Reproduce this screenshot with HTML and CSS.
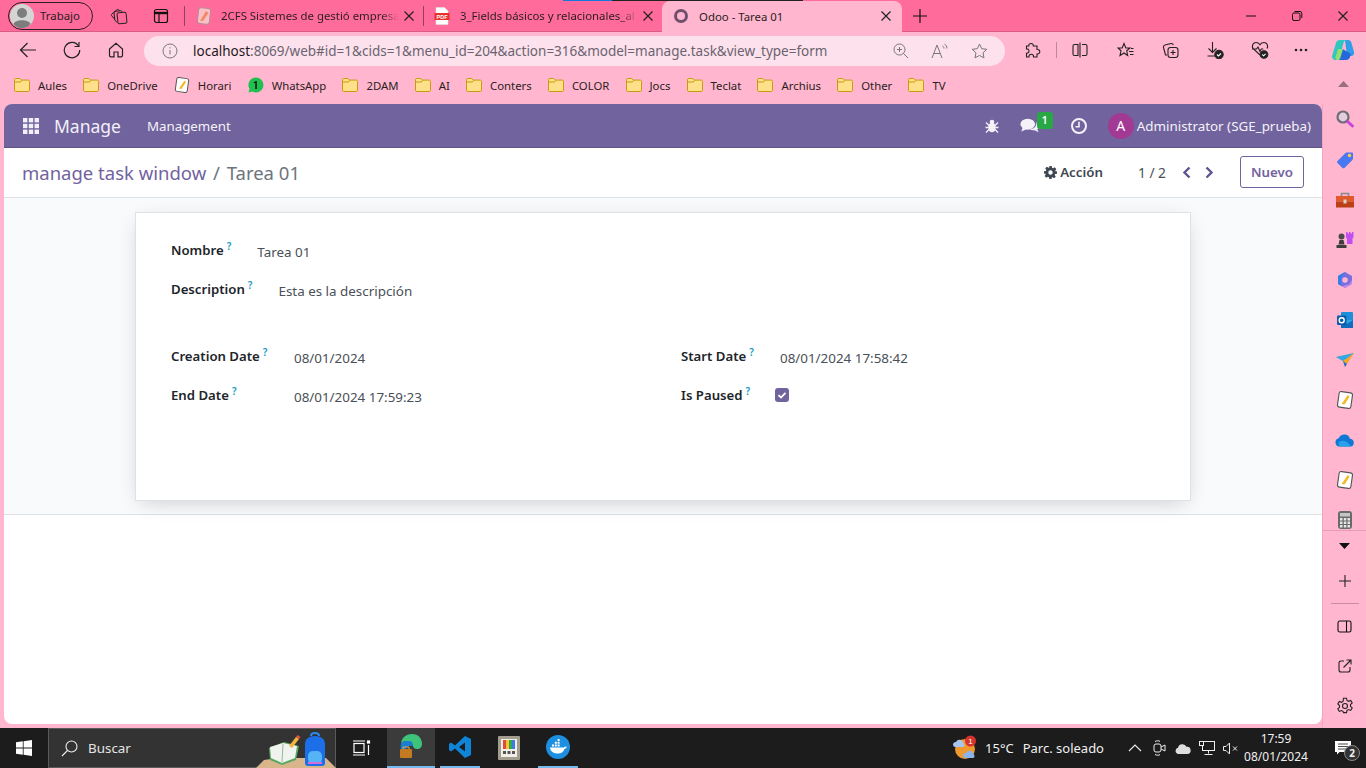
FILE: index.html
```html
<!DOCTYPE html>
<html>
  <head>
    <meta charset="UTF-8" />
    <title>Odoo - Tarea 01</title>
    <link rel="stylesheet" href="styles.css">
  </head>
  <body>
    <svg class="defs" width="0" height="0">
      <symbol id="folder" viewBox="0 0 16 16">
        <path d="M.5 2.700C.5 2 1 1.500 1.700 1.500h4l1.600 1.600h7c.7 0 1.200.5 1.200 1.200v9c0 .7-.5 1.200-1.200 1.200H1.700c-.7 0-1.200-.5-1.200-1.200z" fill="#ffe08a" stroke="#c9990f" />
        <path d="M.5 5h6l1.200-1.700" fill="none" stroke="#c9990f" />
      </symbol>
      <symbol id="note" viewBox="0 0 16 16">
        <rect x="2" y="1" width="12" height="14" rx="2" fill="#fff" stroke="#555" transform="rotate(8 8 8)" />
        <path d="M5 11.500 10.500 3.500 12 5 7.500 12z" fill="#f2b824" />
      </symbol>
      <symbol id="close" viewBox="0 0 12 12">
        <path d="M1.500 1.500l9 9M10.500 1.500l-9 9" stroke="#222" stroke-width="1.200" fill="none" />
      </symbol>
    </svg>

    <div class="tabstrip">
      <div class="profile">
        <span class="profile-pic">
          <svg width="24" height="24" viewBox="0 0 24 24"><circle cx="12" cy="12" r="12" fill="#d5d5d5" /><circle cx="12" cy="9" r="5" fill="#7d7d7d" /><path d="M3.500 20c1.500-5 15.500-5 17 0-4 5.500-13 5.500-17 0z" fill="#7d7d7d" /></svg>
        </span>
        Trabajo
      </div>
      <span class="strip-btn">
        <svg width="18" height="18" viewBox="0 0 18 18" fill="none" stroke="#222"><rect x="7.500" y="5.500" width="9" height="11" rx="1.500" transform="rotate(-6 12 11)" /><path d="M7 15.500 4.800 13 4 5.800c0-.8.300-1.300 1-1.400l5.500-.7c.8-.1 1.300.3 1.500 1" /><path d="M4.500 12 1.700 8.800c-.5-.6-.4-1.300.2-1.800l5-4.200c.6-.5 1.300-.5 1.800 0l1 1" /></svg>
      </span>
      <span class="strip-btn">
        <svg width="16" height="16" viewBox="0 0 16 16" fill="none" stroke="#111" stroke-width="1.200"><rect x="1.500" y="1.500" width="13" height="13" rx="2" /><path d="M1.500 5h13" stroke-width="2.400" /><path d="M6 5v9.500" /></svg>
      </span>
      <span class="tab-sep first"></span>
      <div class="tab">
        <svg class="fav" width="16" height="18" viewBox="0 0 16 18"><rect x="2" y="1" width="12" height="16" rx="2.500" fill="#f9c0c8" stroke="#b98a94" transform="rotate(6 8 9)" /><path d="M4 14 10 4l2.500 2L7 14z" fill="#f48a64" /></svg>
        <span class="tab-title">2CFS Sistemes de gestió empresa</span>
        <svg class="tab-x" width="12" height="12"><use href="#close" /></svg>
      </div>
      <span class="tab-sep"></span>
      <div class="tab pdf">
        <svg class="fav" width="16" height="18" viewBox="0 0 16 18">
          <path d="M2 .5h8.500L14 4v13.500H2z" fill="#fff" stroke="#ddd" stroke-width=".6" />
          <rect x=".5" y="6" width="15" height="7" fill="#e8312a" />
          <text x="8" y="11.500" font-size="5.500" font-weight="700" fill="#fff" text-anchor="middle" font-family="Liberation Sans">PDF</text>
        </svg>
        <span class="tab-title">3_Fields básicos y relacionales_al</span>
        <svg class="tab-x" width="12" height="12"><use href="#close" /></svg>
      </div>
      <div class="tab active">
        <svg class="fav" width="16" height="16" viewBox="0 0 16 16"><circle cx="8" cy="8" r="5.500" fill="none" stroke="#71506f" stroke-width="3" /></svg>
        <span class="tab-title">Odoo - Tarea 01</span>
        <svg class="tab-x" width="12" height="12"><use href="#close" /></svg>
      </div>
      <span class="new-tab">
        <svg width="16" height="16" viewBox="0 0 16 16"><path d="M8 1v14M1 8h14" stroke="#111" stroke-width="1.200" /></svg>
      </span>
      <div class="win-controls">
        <span class="win-btn"><svg width="12" height="12" viewBox="0 0 12 12"><path d="M1 6h10" stroke="#111" /></svg></span>
        <span class="win-btn"><svg width="12" height="12" viewBox="0 0 12 12" fill="none" stroke="#111"><rect x="1.500" y="3" width="7.500" height="7.500" rx="1.500" /><path d="M3.500 1.500H9A1.800 1.800 0 0 1 10.800 3.300V8" /></svg></span>
        <span class="win-btn"><svg width="12" height="12"><use href="#close" /></svg></span>
      </div>
      <span class="load-line"></span>
    </div>

    <div class="toolbar">
      <span class="tool-btn">
        <svg width="18" height="18" viewBox="0 0 18 18" fill="none" stroke="#222" stroke-width="1.200"><path d="M17 9H1.500M8.500 2 1.500 9l7 7" /></svg>
      </span>
      <span class="tool-btn">
        <svg width="18" height="18" viewBox="0 0 18 18" fill="none" stroke="#222" stroke-width="1.200"><path d="M15.500 5A7.700 7.700 0 1 0 16.700 9" /><path d="M16 1v4.500h-4.500" /></svg>
      </span>
      <span class="tool-btn">
        <svg width="16" height="16" viewBox="0 0 16 16" fill="none" stroke="#222" stroke-width="1.200"><path d="M1.500 7 8 1.200 14.500 7v6.500a1.300 1.300 0 0 1-1.300 1.300H10V10H6v4.800H2.800a1.300 1.300 0 0 1-1.300-1.300z" /></svg>
      </span>
      <div class="address">
        <svg class="info" width="16" height="16" viewBox="0 0 16 16" fill="none" stroke="#777"><circle cx="8" cy="8" r="7" /><path d="M8 7v4.500M8 4.200v1.200" /></svg>
        <span class="url"><b>localhost</b>:8069/web#id=1&amp;cids=1&amp;menu_id=204&amp;action=316&amp;model=manage.task&amp;view_type=form</span>
        <span class="addr-icons">
          <svg width="16" height="16" viewBox="0 0 16 16" fill="none" stroke="#777"><circle cx="6.500" cy="6.500" r="5.500" /><path d="M10.500 10.500 15 15M6.500 4v5M4 6.500h5" /></svg>
          <svg width="18" height="16" viewBox="0 0 18 16" fill="none" stroke="#777"><path d="M1 15 6 2l5 13M2.800 10.500h6.500M11.500 3c1 .5 1.500 1.500 1.500 2.500M13.500 1c1.500 1 2.500 2.500 2.500 4.500" /></svg>
          <svg width="17" height="16" viewBox="0 0 17 16" fill="none" stroke="#777"><path d="M8.500 1l2.200 4.700 5.100.6-3.800 3.500 1 5.100-4.500-2.500-4.500 2.500 1-5.100L1.200 6.300l5.100-.6z" /></svg>
        </span>
      </div>
      <div class="tool-right">
        <span class="tool-btn">
          <svg width="16" height="16" viewBox="0 0 16 16" fill="none" stroke="#222" stroke-width="1.100"><path d="M6 1.500c1.500 0 2.500 1 2.300 2.500H12v3.500c1.800-.2 2.800.9 2.800 2.200s-1 2.500-2.800 2.300V15H8.500c.2-1.800-.8-2.700-2.200-2.700S3.800 13.200 4 15H1.500v-3.800C3 11.400 4 10.400 4 9S3 6.700 1.500 6.900V4h2.300C3.600 2.500 4.500 1.500 6 1.500z" /></svg>
        </span>
        <span class="tool-sep"></span>
        <span class="tool-btn">
          <svg width="16" height="16" viewBox="0 0 16 16" fill="none" stroke="#222" stroke-width="1.100"><path d="M6 2.500H2.500A1.500 1.500 0 0 0 1 4v8a1.500 1.500 0 0 0 1.500 1.500H6zM8 .5v15M10 2.500h3.500A1.500 1.500 0 0 1 15 4v8a1.500 1.500 0 0 1-1.500 1.500H10" /></svg>
        </span>
        <span class="tool-btn">
          <svg width="17" height="16" viewBox="0 0 17 16" fill="none" stroke="#222" stroke-width="1.100"><path d="M7 1.500 8.800 6H13l-3.300 2.800 1 4.700L7 11 3 13.500l1-4.700L1 6h4.200zM12 9.500h4.500M13 12.500h3.500M14 6.500h2.500" /></svg>
        </span>
        <span class="tool-btn">
          <svg width="17" height="17" viewBox="0 0 17 17" fill="none" stroke="#222" stroke-width="1.100"><path d="M5 13H3.500L1.500 5.500A2 2 0 0 1 3 3l6-1.500c1-.2 2 .3 2.300 1.500" /><rect x="6" y="5.500" width="10" height="10" rx="2.500" /><path d="M11 8v5M8.500 10.500h5" /></svg>
        </span>
        <span class="tool-btn">
          <svg width="18" height="18" viewBox="0 0 18 18" fill="none" stroke="#222" stroke-width="1.100"><path d="M6.500 1v10M2.500 7.500l4 4 4-4M1.500 15h8" /><circle cx="13" cy="13.500" r="4.200" fill="#222" /><path d="M11 13.500l1.500 1.500 2.500-2.500" stroke="#fff" /></svg>
        </span>
        <span class="tool-btn">
          <svg width="18" height="18" viewBox="0 0 18 18" fill="none" stroke="#222" stroke-width="1.100"><path d="M9 14 2 7.500C.5 5 2 1.500 5 1.500c2 0 3.200 1 4 2.200.8-1.200 2-2.200 4-2.200 3 0 4.500 3.500 3 6M1 8h4.500l1.500-2 2 4.500 1.300-2.500h2" /><circle cx="13" cy="13.500" r="3.800" fill="#222" /><path d="M11.300 13.500l1.300 1.300 2-2" stroke="#fff" /></svg>
        </span>
        <span class="tool-btn more">
          <svg width="14" height="4" viewBox="0 0 14 4" fill="#222"><circle cx="2" cy="2" r="1.300" /><circle cx="7" cy="2" r="1.300" /><circle cx="12" cy="2" r="1.300" /></svg>
        </span>
        <span class="copilot">
          <svg width="24" height="24" viewBox="0 0 24 24" fill="none"><path d="M14 2h3c2 0 3 1 3.500 3L23 14c.5 2.500-1 4-3 4h-4z" fill="#2f9de8" /><path d="M8 22h7c2 0 3.300-1 4-3l1-3-10-6z" fill="#2468dc" /><path d="M9 2h7c-2 0-3 1-3.500 3L9 18c-.5 2.500-2.500 4-4.500 4S.5 20 1.200 17.500L5 5c.5-2 2-3 4-3z" fill="#2fc7c0" /><path d="M7 11 4.500 19c-.4 1.500.5 3 2 3 1.500 0 2.500-1 3-2.500L12 11z" fill="#8fe06e" /></svg>
        </span>
      </div>
    </div>

    <div class="bookmarks">
      <span class="bm"><svg class="bm-ico"><use href="#folder" /></svg>Aules</span>
      <span class="bm"><svg class="bm-ico"><use href="#folder" /></svg>OneDrive</span>
      <span class="bm"><svg class="bm-ico"><use href="#note" /></svg>Horari</span>
      <span class="bm">
        <svg class="bm-ico" viewBox="0 0 16 16"><path d="M8 .5a7.500 7.500 0 0 1 0 15 7.400 7.400 0 0 1-3.500-.9L.5 15.500l1-3.700A7.500 7.500 0 0 1 8 .5z" fill="#1fc04f" /><path d="M8.800 4v8H7.300V6H5.800V5c1 0 1.500-.3 1.800-1z" fill="#111" /></svg>
        WhatsApp
      </span>
      <span class="bm"><svg class="bm-ico"><use href="#folder" /></svg>2DAM</span>
      <span class="bm"><svg class="bm-ico"><use href="#folder" /></svg>AI</span>
      <span class="bm"><svg class="bm-ico"><use href="#folder" /></svg>Conters</span>
      <span class="bm"><svg class="bm-ico"><use href="#folder" /></svg>COLOR</span>
      <span class="bm"><svg class="bm-ico"><use href="#folder" /></svg>Jocs</span>
      <span class="bm"><svg class="bm-ico"><use href="#folder" /></svg>Teclat</span>
      <span class="bm"><svg class="bm-ico"><use href="#folder" /></svg>Archius</span>
      <span class="bm"><svg class="bm-ico"><use href="#folder" /></svg>Other</span>
      <span class="bm"><svg class="bm-ico"><use href="#folder" /></svg>TV</span>
      <svg class="bm-collapse" width="11" height="6" viewBox="0 0 11 6"><path d="M5.500 0 11 6H0z" fill="#96707f" /></svg>
    </div>

    <div class="middle">
      <div class="webview">
        <nav class="navbar">
          <svg class="apps" width="16" height="16" viewBox="0 0 16 16" fill="#f1eff7">
            <rect width="4.400" height="4.400" /><rect x="5.800" width="4.400" height="4.400" /><rect x="11.600" width="4.400" height="4.400" />
            <rect y="5.800" width="4.400" height="4.400" /><rect x="5.800" y="5.800" width="4.400" height="4.400" /><rect x="11.600" y="5.800" width="4.400" height="4.400" />
            <rect y="11.600" width="4.400" height="4.400" /><rect x="5.800" y="11.600" width="4.400" height="4.400" /><rect x="11.600" y="11.600" width="4.400" height="4.400" />
          </svg>
          <span class="brand">Manage</span>
          <span class="menu">Management</span>
          <div class="systray">
            <svg class="bug" width="14" height="14" viewBox="0 0 14 14" fill="#f4f2f8"><ellipse cx="7" cy="8.500" rx="3.800" ry="4.800" /><circle cx="7" cy="3" r="2.300" /><path d="M1 3.500l3 3M13 3.500l-3 3M.5 8.500h3M13.500 8.500h-3M1 13.500l3-3M13 13.500l-3-3" stroke="#f4f2f8" stroke-width="1.300" /></svg>
            <span class="chat">
              <svg width="20" height="16" viewBox="0 0 22 17" fill="#f4f2f8"><ellipse cx="8.500" cy="6.500" rx="8" ry="6" /><path d="M3 10 1.500 14.500 7 12z" /><path d="M18 4.500c2.500 1 3.500 3 3 5-.3 1.200-1 2-2 2.700l1.500 3.300-4.500-2.300c-2 .3-4 0-5.500-1 4 0 8-2.500 7.500-7.700z" /></svg>
              <span class="chat-badge">1</span>
            </span>
            <svg class="clock" width="16" height="16" viewBox="0 0 16 16" fill="none" stroke="#f4f2f8"><circle cx="8" cy="8" r="7" stroke-width="2" /><path d="M8 3.800V8.700H4.500" stroke-width="1.600" /></svg>
            <span class="avatar">A</span>
            <span class="user">Administrator (SGE_prueba)</span>
          </div>
        </nav>

        <div class="control-panel">
          <div class="breadcrumb"><span class="crumb-link">manage task window</span> <span class="crumb-sep">/</span> Tarea 01</div>
          <div class="actions">
            <span class="action-btn">
              <svg width="13" height="13" viewBox="0 0 16 16"><path fill-rule="evenodd" d="M6.500 0h3l.4 2.200 1.300.6L13.100 1.500l2.100 2.100-1.300 1.900.6 1.300L16 6.500v3l-2.200.4-.6 1.300 1.300 1.900-2.100 2.100-1.900-1.300-1.300.6L9.500 16h-3l-.4-2.200-1.300-.6-1.900 1.300L.8 12.400l1.300-1.900-.6-1.300L0 9.500v-3l2.200-.4.6-1.300L1.500 2.900 3.600.8l1.900 1.300 1.300-.6zM8 5.300a2.700 2.700 0 1 0 0 5.400 2.700 2.700 0 0 0 0-5.400z" fill="#3f4850" /></svg>
              Acción
            </span>
            <span class="pager">1 / 2</span>
            <svg class="pager-arrow" width="9" height="13" viewBox="0 0 9 13" fill="none" stroke="#5f5390" stroke-width="2.400"><path d="M7.500 1.500l-5 5 5 5" /></svg>
            <svg class="pager-arrow next" width="9" height="13" viewBox="0 0 9 13" fill="none" stroke="#5f5390" stroke-width="2.400"><path d="M1.500 1.500l5 5-5 5" /></svg>
            <span class="btn-new">Nuevo</span>
          </div>
        </div>

        <div class="form-area">
          <div class="sheet">
            <div class="field-row">
              <span class="label">Nombre<sup>?</sup></span>
              <span class="value">Tarea 01</span>
            </div>
            <div class="field-row">
              <span class="label">Description<sup>?</sup></span>
              <span class="value">Esta es la descripción</span>
            </div>
            <div class="group">
              <span class="label">Creation Date<sup>?</sup></span>
              <span class="value">08/01/2024</span>
              <span class="label">Start Date<sup>?</sup></span>
              <span class="value">08/01/2024 17:58:42</span>
              <span class="label">End Date<sup>?</sup></span>
              <span class="value">08/01/2024 17:59:23</span>
              <span class="label">Is Paused<sup>?</sup></span>
              <span class="check">
                <svg width="10" height="10" viewBox="0 0 10 10" fill="none" stroke="#fff" stroke-width="1.800"><path d="M1.500 5.200 4 7.500 8.500 2.800" /></svg>
              </span>
            </div>
          </div>
        </div>
      </div>

      <aside class="sidebar">
        <span class="side-ico">
          <svg width="18" height="18" viewBox="0 0 18 18" fill="none"><circle cx="7" cy="7" r="5.500" stroke="#6d6d78" stroke-width="2.200" fill="#e3cfdc" /><path d="M11.500 11.500 16.500 16" stroke="#c642d8" stroke-width="2.800" stroke-linecap="round" /></svg>
        </span>
        <span class="side-ico">
          <svg width="18" height="18" viewBox="0 0 18 18"><path d="M1.500 10 9.500 2c.5-.5 1-.6 1.500-.6h5c.5 0 1 .4 1 1v5c0 .5-.2 1-.6 1.500l-8 8c-.6.6-1.400.6-2 0l-4.900-4.900c-.6-.6-.6-1.400 0-2z" fill="#4a78f0" /><circle cx="13.500" cy="4.500" r="1.700" fill="#ffd23f" /></svg>
        </span>
        <span class="side-ico">
          <svg width="20" height="18" viewBox="0 0 20 18"><path d="M6.500 5V2.500h7V5" fill="none" stroke="#8a8a8a" stroke-width="1.600" /><rect x="1" y="5" width="18" height="5.500" fill="#e0592a" /><rect x="1" y="10.500" width="18" height="6" fill="#bb3f17" /><rect x="8.500" y="8.500" width="3" height="4" fill="#d9d3c8" /></svg>
        </span>
        <span class="side-ico">
          <svg width="20" height="18" viewBox="0 0 20 18"><path d="M11 1h1.500v1.500H14V1h1.500v1.500H17V1h1.500v5.500l-1 1V13H12V7.500l-1-1z" fill="#c24df2" /><circle cx="6.500" cy="5.500" r="3" fill="#4b4b4b" /><path d="M4.500 9h4l1 4.500h-6zM1.500 14h10v3h-10z" fill="#3d3d3d" /></svg>
        </span>
        <span class="side-ico">
          <svg width="18" height="18" viewBox="0 0 18 18" fill="none"><path d="M9 1 16 5v8l-7 4-7-4V5z" fill="#7a6ee0" /><path d="M9 1 2 5v8l3 1.800V7z" fill="#2f80e8" /><path d="M16 9v4l-7 4-3-1.700 7-1.800z" fill="#c58bea" /><circle cx="9" cy="9" r="2.800" fill="#ffb7cf" /></svg>
        </span>
        <span class="side-ico">
          <svg width="18" height="18" viewBox="0 0 18 18"><rect x="5" y="1" width="12" height="16" rx="1" fill="#1c8fdb" /><path d="M5 9h12v8H5z" fill="#0f6cbd" /><path d="M5 9l6 4 6-4" fill="#28a8ea" /><rect x="1" y="4.500" width="9.500" height="9.500" rx="1" fill="#0a5ca8" /><circle cx="5.700" cy="9.200" r="2.500" fill="none" stroke="#fff" stroke-width="1.400" /></svg>
        </span>
        <span class="side-ico">
          <svg width="18" height="16" viewBox="0 0 18 16"><path d="M0 5 18 1 9 15 7 9z" fill="#f5a623" /><path d="M0 5l7 4 11-8z" fill="#2da8f0" /><path d="M7 9l2 6 2-3z" fill="#1c6fe0" /></svg>
        </span>
        <span class="side-ico"><svg width="18" height="18"><use href="#note" /></svg></span>
        <span class="side-ico">
          <svg width="20" height="13" viewBox="0 0 20 13"><path d="M4.500 12.500A4.200 4.200 0 0 1 3.800 4.200 6 6 0 0 1 15 4.700a4 4 0 0 1 1 7.800z" fill="#0f78d4" /><path d="M4.500 12.500A4.200 4.200 0 0 1 3.800 8c3-2 8-2 12 4.500z" fill="#2aa0e8" /></svg>
        </span>
        <span class="side-ico"><svg width="18" height="18"><use href="#note" /></svg></span>
        <span class="side-ico">
          <svg width="14" height="18" viewBox="0 0 14 18"><rect width="14" height="18" rx="3" fill="#6a6a6a" /><rect x="2" y="2" width="10" height="3.500" fill="#c5c5c5" /><g fill="#e6e6e6"><rect x="2" y="7" width="2.500" height="2.500" /><rect x="5.800" y="7" width="2.500" height="2.500" /><rect x="9.500" y="7" width="2.500" height="2.500" /><rect x="2" y="10.500" width="2.500" height="2.500" /><rect x="5.800" y="10.500" width="2.500" height="2.500" /><rect x="9.500" y="10.500" width="2.500" height="2.500" /><rect x="2" y="14" width="2.500" height="2.500" /><rect x="5.800" y="14" width="2.500" height="2.500" /><rect x="9.500" y="14" width="2.500" height="2.500" /></g></svg>
        </span>
        <div class="side-bottom">
          <span class="side-tri"><svg width="11" height="6" viewBox="0 0 11 6"><path d="M0 0h11L5.500 6z" fill="#111" /></svg></span>
          <span class="side-plain"><svg width="14" height="14" viewBox="0 0 14 14"><path d="M7 1v12M1 7h12" stroke="#222" stroke-width="1.100" /></svg></span>
          <span class="side-rule"></span>
          <span class="side-plain"><svg width="15" height="13" viewBox="0 0 15 13" fill="none" stroke="#111" stroke-width="1.100"><rect x="1" y="1" width="13" height="11" rx="1.800" /><path d="M9.500 1v11" /></svg></span>
          <span class="side-plain"><svg width="14" height="14" viewBox="0 0 14 14" fill="none" stroke="#222" stroke-width="1.100"><path d="M6 2H3a2 2 0 0 0-2 2v7a2 2 0 0 0 2 2h7a2 2 0 0 0 2-2V8M5.500 8.500 13 1M8.500 1H13v4.500" /></svg></span>
          <span class="side-plain"><svg width="18" height="18" viewBox="0 0 18 18" fill="none" stroke="#222" stroke-width="1.100"><circle cx="9" cy="9" r="2.500" /><path d="M7.500 1.200h3l.5 2.300 1.500.8 2.200-.9 1.500 2.600-1.700 1.500v1.800l1.700 1.500-1.500 2.600-2.200-.9-1.500.8-.5 2.300h-3L7 14.300l-1.500-.8-2.200.9L1.800 11.800l1.700-1.500V8.500L1.800 7l1.500-2.600 2.200.9L7 4.500z" /></svg></span>
        </div>
      </aside>
    </div>

    <footer class="taskbar">
      <span class="start">
        <svg width="16" height="16" viewBox="0 0 16 16" fill="#fff"><path d="M0 2.300 6.800 1.300V7.600H0zM7.600 1.200 16 0V7.600H7.600zM0 8.400H6.800V14.700L0 13.700zM7.600 8.400H16V16L7.600 14.800z" /></svg>
      </span>
      <div class="search">
        <svg width="17" height="17" viewBox="0 0 17 17" fill="none" stroke="#eee" stroke-width="1.100"><circle cx="10.500" cy="6.500" r="5.500" /><path d="M6.500 10.500 1 16" /></svg>
        <span class="search-text">Buscar</span>
        <svg class="search-art" width="80" height="40" viewBox="0 0 80 40">
          <path d="M0 40 8 32 22 30H70L80 40z" fill="#d8b58a" />
          <path d="M13 20 28 14 43 18 40 32 26 37 14 32z" fill="#5aa860" />
          <path d="M14 19 27 15 41 18 39 30 26 35 15 30z" fill="#f1f3ee" />
          <path d="M27 16 26 34" stroke="#9bb59c" />
          <path d="M33 18 40 9l3 2-7 9z" fill="#f5b63f" />
          <path d="M40 9l1.500-2 3 2-1.500 2z" fill="#e8533f" />
          <path d="M49 16c0-5 4-8 10-8s10 3 10 8v19c0 2-1 3-3 3H52c-2 0-3-1-3-3z" fill="#1c6fe8" />
          <path d="M55 8c0-4 8-4 8 0" fill="none" stroke="#2a8bf0" stroke-width="2" />
          <rect x="52" y="23" width="14" height="13" rx="5" fill="#54b4f5" />
          <path d="M52 35h14" stroke="#d66be0" stroke-width="2" />
        </svg>
      </div>
      <span class="task-view">
        <svg width="18" height="16" viewBox="0 0 18 16" fill="none" stroke="#fff" stroke-width="1.200"><rect x="1" y="3.500" width="10" height="9" /><path d="M0 1h12M0 15h12M15.500 5v10" /><rect x="14.500" y="1" width="2" height="2" fill="#fff" /></svg>
      </span>
      <span class="task-app current">
        <svg width="24" height="26" viewBox="0 0 24 26"><path d="M2 9C3 3 8 0 13 0c6 0 10 4 10 10 0 3-2 5-5 5-2 0-4-1-4-3 0-3-3-5-6-5-3 0-5 1-6 2z" fill="#3ec47a" /><path d="M2 9c2-2 5-2 8-2 3 0 4 2 4 5-3-1-6 0-7 3-1 4 2 7 6 8-6 1-13-4-11-14z" fill="#1a7fd0" /><rect x="1" y="15" width="12" height="9" rx="1" fill="#c47a21" /><path d="M4 15v-2h6v2" fill="none" stroke="#e5a84a" /></svg>
      </span>
      <span class="task-app code">
        <svg width="22" height="22" viewBox="0 0 22 22"><path d="M16 0 22 3v16l-6 3-10-9.500-4 3L0 14V8l2-1.500 4 3zM16 6.500 10 11l6 4.500z" fill="#0f85d8" /></svg>
      </span>
      <span class="task-app paint">
        <svg width="22" height="24" viewBox="0 0 22 24"><rect width="22" height="24" rx="1" fill="#a39d90" /><rect x="3" y="3" width="16" height="18" fill="#f2efe8" /><path d="M5 4h3v9H5z" fill="#e7483a" /><path d="M8 4h3v9H8z" fill="#f7c531" /><path d="M11 4h3v9h-3z" fill="#31a852" /><path d="M14 4h3v9h-3z" fill="#3e7ae0" /><path d="M5 15h3v3H5zM9.500 15h3v3h-3zM14 15h3v3h-3z" fill="#555" /></svg>
      </span>
      <span class="task-app docker">
        <svg width="24" height="24" viewBox="0 0 24 24"><circle cx="12" cy="12" r="12" fill="#1d8fe0" /><path d="M4 12.500h13c1 0 1.500-.5 2-1 .8.300 1.500.3 2 0-.5 1.500-1.500 2-2.500 2.500-1 3-3.500 4.500-6.500 4.500-4.500 0-7.500-2-8-6z" fill="#fff" /><path d="M6 9.500h2v2H6zM8.800 9.500h2v2h-2zM11.600 9.500h2v2h-2zM8.800 6.800h2v2h-2zM11.600 6.800h2v2h-2zM11.600 4.100h2v2h-2z" fill="#fff" /></svg>
      </span>

      <div class="tray">
        <span class="weather">
          <svg width="26" height="26" viewBox="0 0 26 26"><circle cx="13" cy="14" r="10" fill="#ef9a2e" /><path d="M1 10a3 3 0 0 1 3-3 4 4 0 0 1 7.500 1 2.500 2.500 0 0 1 0 4H3.500A2.500 2.500 0 0 1 1 10z" fill="#a8c6ee" /><path d="M11 21a3 3 0 0 1 3-3 4 4 0 0 1 7.500 1 2.500 2.500 0 0 1 0 4H13.500A2.500 2.500 0 0 1 11 21z" fill="#8ab4ea" /><circle cx="18.500" cy="6" r="5.500" fill="#d7322b" /><text x="18.500" y="9" font-size="8" fill="#fff" text-anchor="middle" font-family="Liberation Sans">1</text></svg>
        </span>
        <span class="temp">15°C</span>
        <span class="sky">Parc. soleado</span>
        <svg class="tray-up" width="14" height="8" viewBox="0 0 14 8" fill="none" stroke="#eee" stroke-width="1.100"><path d="M1 7l6-6 6 6" /></svg>
        <svg class="tray-meet" width="13" height="16" viewBox="0 0 13 16" fill="none" stroke="#eee"><rect x="1" y="4" width="7" height="8" rx="2" /><path d="M8 7l4-2v6l-4-2M2 1.500c2-1 4-1 5 0M2 14.500c2 1 4 1 5 0" /></svg>
        <svg class="tray-cloud" width="16" height="11" viewBox="0 0 16 11"><path d="M3.500 11A3.200 3.200 0 0 1 3 4.700 4.500 4.500 0 0 1 11.500 3.800 3.600 3.600 0 0 1 12.500 11z" fill="#dedede" /></svg>
        <svg class="tray-net" width="16" height="15" viewBox="0 0 16 15" fill="none" stroke="#eee"><rect x="3.500" y=".5" width="12" height="9" /><path d="M9.500 9.500v3M5.500 13.500h8" /><rect x=".5" y=".5" width="4" height="4" fill="#1a1a1a" /></svg>
        <svg class="tray-vol" width="15" height="13" viewBox="0 0 15 13" fill="none" stroke="#eee"><path d="M.5 4.500h2.500L6.500 1v11L3 8.500H.5zM10 4.500l4 4M14 4.500l-4 4" /></svg>
        <div class="clock-text"><span>17:59</span><span>08/01/2024</span></div>
        <span class="notify">
          <svg width="16" height="14" viewBox="0 0 16 14"><path d="M0 0h16v11H4.500L2 13.500V11H0z" fill="#fff" /><path d="M3 3h10M3 5.500h10M3 8h10" stroke="#1a1a1a" stroke-width=".8" /></svg>
          <span class="notify-count">2</span>
        </span>
      </div>
    </footer>
  </body>
</html>
```

FILE: styles.css
```css
* {
  box-sizing: border-box;
}

html,
body {
  margin: 0;
  height: 768px;
  overflow: hidden;
}

body {
  font-family: "Noto Sans", "Open Sans", sans-serif;
  font-size: 13px;
  color: #212529;
  background-color: #ffb6ce;
  display: flex;
  flex-direction: column;
}

.defs {
  position: absolute;
}

/* tab strip */
.tabstrip {
  height: 32px;
  flex: none;
  display: flex;
  align-items: center;
  background-color: #ff6b9b;
  border-bottom: 1px solid #d95c86;
  position: relative;
}

.load-line {
  position: absolute;
  top: 0;
  left: 563px;
  width: 240px;
  height: 1px;
  background: linear-gradient(90deg, #1478dc 49px, #222 49px);
}

.profile {
  width: 85px;
  height: 28px;
  margin-left: 8px;
  display: flex;
  align-items: center;
  gap: 6px;
  padding-left: 1px;
  font-size: 11.4px;
  color: #2b1d22;
  border: 1px solid #2b1d22;
  border-radius: 14px;
}

.profile-pic {
  display: flex;
}

.strip-btn {
  width: 42px;
  display: flex;
  justify-content: center;
}

.strip-btn:first-of-type {
  margin-left: 5px;
}

.tab-sep {
  width: 1px;
  height: 20px;
  background-color: #8f4560;
  flex: none;
}

.tab-sep.first {
  margin-left: 2px;
}

.tab {
  width: 238px;
  height: 31px;
  flex: none;
  display: flex;
  align-items: center;
  padding: 0 8px 0 11px;
  font-size: 11.4px;
  color: #2b1d22;
}

.tab.pdf {
  padding-left: 10px;
}

.tab .fav {
  flex: none;
  margin-right: 9px;
}

.tab.pdf .fav {
  margin-right: 10px;
}

.tab-title {
  flex: 1;
  white-space: nowrap;
  overflow: hidden;
  -webkit-mask-image: linear-gradient(90deg, #000 90%, transparent);
  mask-image: linear-gradient(90deg, #000 90%, transparent);
}

.tab-x {
  flex: none;
  margin-left: 4px;
}

.tab.active {
  width: 240px;
  height: 31px;
  margin-top: 1px;
  background-color: #ffb6ce;
  border-radius: 8px 8px 0 0;
  padding: 0 10px 0 11px;
}

.tab.active .fav {
  margin-right: 10px;
}

.tab.active .tab-title {
  -webkit-mask-image: none;
  mask-image: none;
}

.new-tab {
  width: 36px;
  display: flex;
  justify-content: center;
}

.win-controls {
  margin-left: auto;
  display: flex;
}

.win-btn {
  width: 46px;
  display: flex;
  justify-content: center;
}

/* toolbar */
.toolbar {
  height: 36px;
  flex: none;
  display: flex;
  align-items: center;
  padding-left: 6px;
}

.tool-btn {
  width: 44px;
  flex: none;
  display: flex;
  justify-content: center;
}

.address {
  width: 861px;
  height: 30px;
  margin-left: 6px;
  margin-top: 1px;
  display: flex;
  align-items: center;
  padding: 0 17px 0 18px;
  background-color: #fde1ec;
  border-radius: 15px;
}

.url {
  margin-left: 15px;
  font-size: 13.5px;
  color: #6a6470;
  white-space: nowrap;
}

.url b {
  font-weight: 400;
  color: #1f1a1c;
}

.addr-icons {
  margin-left: auto;
  display: flex;
  align-items: center;
  gap: 22px;
}

.tool-right {
  display: flex;
  align-items: center;
  margin-left: 6px;
}

.tool-sep {
  width: 1px;
  height: 16px;
  background-color: #b98a9b;
  margin: 0 1px;
}

.tool-right .tool-btn + .tool-btn {
  margin-left: 1px;
}

.tool-btn.more {
  width: 36px;
}

.copilot {
  margin-left: 12px;
  display: flex;
}

/* bookmarks */
.bookmarks {
  height: 36px;
  flex: none;
  display: flex;
  align-items: center;
  gap: 16.2px;
  padding: 0 0 2px 14px;
}

.bm {
  display: flex;
  align-items: center;
  gap: 8px;
  font-size: 11.35px;
  color: #2b1d22;
}

.bm-ico {
  width: 16px;
  height: 16px;
  flex: none;
}

.bm-collapse {
  position: absolute;
  top: 81px;
  right: 17px;
}

/* page */
.middle {
  flex: 1;
  display: flex;
  min-height: 0;
  padding-left: 4px;
}

.webview {
  width: 1318px;
  height: 620px;
  background-color: #fff;
  border-radius: 8px;
  overflow: hidden;
}

.navbar {
  height: 44px;
  display: flex;
  align-items: center;
  padding-left: 19px;
  background-color: #71639e;
  border-bottom: 1px solid #5f5385;
  color: #f4f2f8;
}

.brand {
  margin-left: 15px;
  font-size: 17.5px;
  color: #f1eff7;
}

.menu {
  margin-left: 26px;
  font-size: 13.3px;
}

.systray {
  margin-left: auto;
  display: flex;
  align-items: center;
  padding-right: 11px;
}

.chat {
  margin-left: 21px;
  position: relative;
  display: flex;
}

.chat-badge {
  position: absolute;
  top: -6px;
  left: 17px;
  width: 16px;
  height: 17px;
  background-color: #28a745;
  color: #fff;
  border-radius: 3px;
  font-size: 11px;
  font-weight: 600;
  line-height: 16px;
  text-align: center;
}

.clock {
  margin-left: 31px;
}

.avatar {
  width: 26px;
  height: 26px;
  margin-left: 21px;
  background-color: #a23a94;
  border-radius: 50%;
  font-size: 14px;
  line-height: 26px;
  text-align: center;
  color: #fff;
}

.user {
  margin-left: 3px;
  font-size: 13.4px;
}

.control-panel {
  height: 50px;
  display: flex;
  align-items: center;
  justify-content: space-between;
  padding: 0 18px 1px;
  border-bottom: 1px solid #dee2e6;
}

.breadcrumb {
  font-size: 18.5px;
  color: #6c757d;
}

.crumb-link {
  color: #71639e;
}

.crumb-sep {
  margin: 0 2px;
}

.actions {
  display: flex;
  align-items: center;
}

.action-btn {
  display: flex;
  align-items: center;
  gap: 3px;
  font-size: 13.3px;
  font-weight: 600;
  color: #3f4850;
}

.pager {
  margin-left: 35px;
  font-size: 13.8px;
  color: #495057;
}

.pager-arrow {
  margin-left: 16px;
}

.pager-arrow.next {
  margin-left: 14px;
}

.btn-new {
  width: 64px;
  height: 32px;
  margin-left: 26px;
  border: 1px solid #71639e;
  border-radius: 3px;
  font-size: 13.3px;
  font-weight: 600;
  line-height: 30px;
  text-align: center;
  color: #71639e;
}

.form-area {
  height: 317px;
  padding: 14px 131px;
  background-color: #f9fafb;
  border-bottom: 1px solid #dee2e6;
}

.sheet {
  height: 289px;
  padding: 28px 35px 0;
  background-color: #fff;
  border: 1px solid #dee2e6;
  box-shadow: 0 5px 20px -5px rgba(0, 0, 0, 0.2);
}

.field-row {
  height: 39px;
  display: flex;
  gap: 26px;
}

.label {
  font-size: 13.2px;
  font-weight: 600;
  color: #212529;
  white-space: nowrap;
}

.label sup {
  margin-left: 3px;
  font-size: 10px;
  line-height: 0;
  color: #1a9cc4;
}

.value {
  padding-top: 2px;
  font-size: 13.4px;
  color: #495057;
  white-space: nowrap;
}

.group {
  margin-top: 28px;
  display: grid;
  grid-template-columns: 123px 387px 99px 1fr;
  grid-auto-rows: 39px;
}

.check {
  width: 14px;
  height: 14px;
  margin-left: -5px;
  margin-top: 2px;
  display: flex;
  align-items: center;
  justify-content: center;
  background-color: #71639e;
  border-radius: 3px;
}

/* right sidebar */
.sidebar {
  width: 44px;
  display: flex;
  flex-direction: column;
  align-items: center;
  border-left: 1px solid #f0a8c1;
}

.side-ico {
  height: 40px;
  flex: none;
  display: flex;
  align-items: center;
  justify-content: center;
}

.side-ico:first-child {
  height: 30px;
  margin-bottom: 6px;
}

.side-bottom {
  width: 100%;
  margin-top: -10px;
  border-top: 1px solid #e59db6;
  display: flex;
  flex-direction: column;
  align-items: center;
}

.side-tri {
  height: 30px;
  display: flex;
  align-items: center;
}

.side-plain {
  height: 40px;
  flex: none;
  display: flex;
  align-items: center;
}

.side-rule {
  width: 28px;
  height: 1px;
  flex: none;
  margin: 2px 0;
  background-color: #c98da3;
}

/* taskbar */
.taskbar {
  height: 40px;
  flex: none;
  display: flex;
  align-items: center;
  background-color: #1c1c1c;
  color: #f0f0f0;
  position: fixed;
  left: 0;
  right: 0;
  bottom: 0;
}

.start {
  width: 48px;
  display: flex;
  justify-content: center;
}

.search {
  width: 288px;
  height: 40px;
  display: flex;
  align-items: center;
  padding-left: 12px;
  background-color: #333;
  border: 1px solid #5a5a5a;
  position: relative;
}

.search-text {
  margin-left: 10px;
  font-size: 13.4px;
  color: #e4e4e4;
}

.search-art {
  position: absolute;
  right: -1px;
  bottom: -1px;
}

.task-view {
  width: 51px;
  display: flex;
  justify-content: center;
}

.task-app {
  height: 40px;
  display: flex;
  align-items: center;
  justify-content: center;
}

.task-app.current {
  width: 48px;
  background-color: #3b3b3b;
  border-bottom: 2px solid #76b9ed;
}

.task-app.code {
  width: 40px;
  margin-left: 5px;
  border-bottom: 2px solid #76b9ed;
}

.task-app.paint {
  width: 40px;
  margin-left: 9px;
}

.task-app.docker {
  width: 40px;
  margin-left: 9px;
  border-bottom: 2px solid #76b9ed;
}

.tray {
  margin-left: auto;
  display: flex;
  align-items: center;
  font-size: 13px;
}

.weather {
  display: flex;
}

.temp {
  margin-left: 7px;
}

.sky {
  margin-left: 9px;
}

.tray-up {
  margin-left: 24px;
}

.tray-meet {
  margin-left: 11px;
}

.tray-cloud {
  margin-left: 9px;
}

.tray-net {
  margin-left: 8px;
}

.tray-vol {
  margin-left: 8px;
}

.clock-text {
  width: 66px;
  margin-left: 5px;
  display: flex;
  flex-direction: column;
  align-items: center;
  font-size: 12px;
  line-height: 18px;
}

.notify {
  width: 46px;
  margin-left: 11px;
  display: flex;
  justify-content: center;
  position: relative;
}

.notify-count {
  position: absolute;
  top: 4px;
  left: 24px;
  width: 16px;
  height: 16px;
  background-color: #333;
  border: 1px solid #8a8a8a;
  border-radius: 50%;
  font-size: 10px;
  font-weight: 700;
  line-height: 14px;
  text-align: center;
}
```
